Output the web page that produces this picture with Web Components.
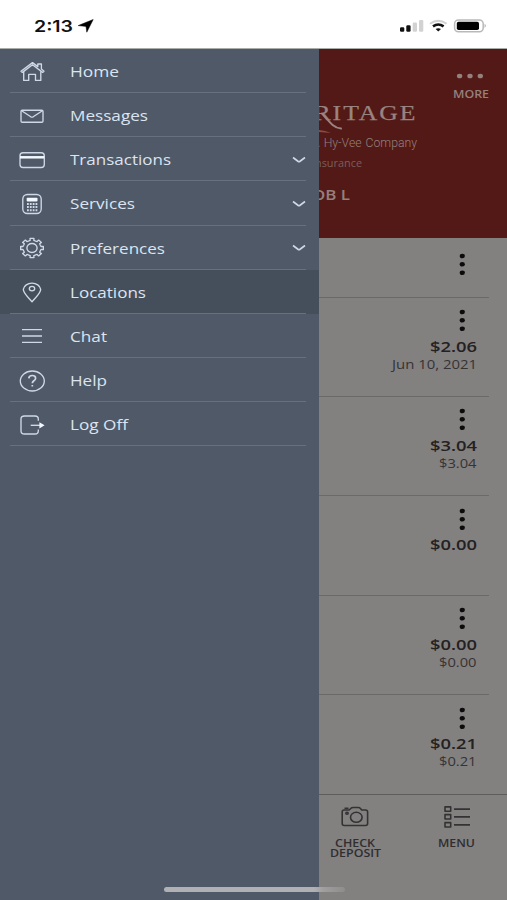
<!DOCTYPE html>
<html lang="en">
<head>
<meta charset="utf-8">
<title>Mobile banking menu</title>
<style>
html, body { margin: 0; height: 100%; background: #fff; }
body { font-family: "Open Sans", "Noto Sans", sans-serif; overflow: hidden; }
</style>
</head>
<body>
<bank-app></bank-app>
<script>
const define = (name, html, init) => {
  const t = document.createElement('template');
  t.innerHTML = html;
  customElements.define(name, class extends HTMLElement {
    connectedCallback() {
      if (this.shadowRoot) return;
      this.attachShadow({ mode: 'open' }).append(t.content.cloneNode(true));
      if (init) init(this, this.shadowRoot);
    }
  });
};

/* Text stretched horizontally to fill the width given by its attribute. */
define('wide-text', `
<style>
:host { display: block; flex: none; white-space: nowrap; }
span { display: inline-block; transform-origin: 0 50%; vertical-align: top; }
</style><span></span>`, (el, root) => {
  const s = root.querySelector('span');
  s.textContent = el.getAttribute('text');
  const w = +el.getAttribute('w');
  el.style.width = w + 'px';
  s.style.transform = 'scaleX(' + w / s.getBoundingClientRect().width + ')';
});

define('status-bar', `
<style>
:host { display: flex; box-sizing: border-box; height: 49px; padding: 0 19px 0 33.5px; align-items: center; background: #fff; border-bottom: 1px solid #a9aca9; color: #111; }
wide-text { font: 600 16px/20px Inter, sans-serif; margin-top: 4px; }
svg { display: block; margin-top: 3px; }
.arrow { margin-left: 5px; }
.right { margin-left: auto; }
</style>
<wide-text text="2:13" w="39"></wide-text>
<svg class="arrow" width="16" height="14" viewBox="0 0 16 14"><path d="M15.2.5 8.8 13.2 8 7.4.2 6.6Z" fill="#000" stroke="#000" stroke-width=".5" stroke-linejoin="round"/></svg>
<svg class="right" width="88" height="14" viewBox="0 0 88 14">
  <g fill="#111"><rect y="8.2" width="4.3" height="4.5" rx="1.2"/><rect x="6.3" y="6.2" width="4.3" height="6.5" rx="1.2"/></g>
  <g fill="#d2d2d2"><rect x="12.7" y="3.5" width="4.3" height="9.2" rx="1.2"/><rect x="19" y="1" width="4.3" height="11.7" rx="1.2"/></g>
  <g fill="none"><path d="M30 4.8Q38.3-1.3 46.6 4.8" stroke="#d2d2d2" stroke-width="2"/><path d="M33 7.4Q38.3 3.6 43.6 7.4" stroke="#111" stroke-width="2.6"/></g>
  <path d="M35.6 10Q38.3 8.3 41 10L38.3 12.6Z" fill="#111"/>
  <rect x="54.6" y="1" width="28.6" height="11.8" rx="3.8" fill="#fff" stroke="#b9b9b9" stroke-width="1.5"/>
  <rect x="56.8" y="2.7" width="22.2" height="8.4" rx="1.8" fill="#000"/>
  <path d="M84.6 4.8Q87 6.8 84.6 8.9Z" fill="#aaa"/>
</svg>`);

const icons = {
  home: '<path d="M-11 -.8.5-9.4 5.8-5.4V-8H9.4V-3L12-.8 10.6.4.5-7.2-9.6.4Z"/><path d="M-8.3-.5V8.4H-3.3V2.3H3.5V8.4H8.8V-.5"/>',
  mail: '<rect x="-11" y="-5.8" width="22" height="12" rx="1.2"/><path d="M-10.4-5.2-1.2.8Q0 1.5 1.2.8L10.4-5.2"/>',
  card: '<rect x="-12" y="-7.3" width="24.3" height="14.8" rx="3"/><path d="M-12-2.7H12.3" stroke="#f3f7ff" stroke-width="2.5"/>',
  calc: '<rect x="-9.2" y="-9.5" width="18.4" height="19" rx="4.5"/><rect x="-5.3" y="-6.3" width="10.8" height="3.8" rx=".8" fill="#f3f7ff" stroke="none"/><path d="M-5-0H5.4M-5 3.1H5.4M-5 6.2H5.4" stroke-width="2" stroke-dasharray="1.8 1.05"/>',
  gear: '',
  pin: '<path d="M0 9.8C-2.8 6-8.7 1.7-8.7-2.7A8.8 7.2 0 0 1 8.7-2.7C8.7 1.7 2.8 6 0 9.8Z"/><ellipse cx="0" cy="-3.4" rx="2.7" ry="2.3"/>',
  chat: '<path d="M-10-6.4H10M-10 0H10M-10 6.4H10"/>',
  help: '<ellipse cx=".3" cy="0" rx="12" ry="10"/><path d="M-3.2-2.6C-3-6.6 4-6.4 3.6-2.5 3.3-.1.3-.2.3 2.2M.3 3.9V5.5" stroke-width="1.7"/>',
  exit: '<path d="M6.3-4.2V-6Q6.3-9 3-9H-7.5Q-11-9-11-6V6Q-11 9 -7.5 9H3Q6.3 9 6.3 6V4.5"/><path d="M-1.3.3H8"/><path d="M7.4-2.8 12.6.3 7.4 3.4Z" fill="#f3f7ff" stroke="none"/>'
};
{
  /* Eight-toothed cog, wider than tall. */
  const p = [];
  for (let i = 0; i < 8; i++) {
    [[-.37, .78], [-.2, .8], [-.17, 1], [.17, 1], [.2, .8], [.37, .78]].forEach(([a, r]) => {
      const t = i * Math.PI / 4 + a;
      p.push((11.5 * r * Math.cos(t)).toFixed(2) + ' ' + (9.7 * r * Math.sin(t)).toFixed(2));
    });
  }
  icons.gear = '<path d="M' + p.join('L') + 'Z"/><ellipse rx="5.1" ry="4.5"/>';
}

define('menu-item', `
<style>
:host { display: flex; flex: none; box-sizing: border-box; height: 44.15px; align-items: center; position: relative; padding: 1px 13px 0 16px; color: #dce4f1; font-size: 14.2px; line-height: 20px; }
:host([active]) { background: #454f5c; }
:host::after { content: ""; position: absolute; left: 10px; right: 13px; bottom: 0; height: 1px; background: #67717e; }
svg { display: block; flex: none; fill: none; stroke: #cfd8e6; stroke-width: 1.35; stroke-linejoin: round; stroke-linecap: butt; }
wide-text { margin: 1px 0 0 22px; }
.chev { margin-left: auto; stroke-width: 1.6; display: none; }
:host([expandable]) .chev { display: block; }
</style>
<svg class="icon" width="32" height="30" viewBox="-16 -15 32 30"></svg>
<slot></slot>
<svg class="chev" width="14" height="8" viewBox="0 0 14 8"><path d="M1 1.5 6.3 5.5Q7 6 7.7 5.5L13 1.5"/></svg>`, (el, root) => {
  root.querySelector('.icon').innerHTML = icons[el.getAttribute('icon')];
  const t = document.createElement('wide-text');
  t.setAttribute('text', el.getAttribute('label'));
  t.setAttribute('w', el.getAttribute('w'));
  root.querySelector('slot').replaceWith(t);
});

define('side-drawer', `
<style>:host { display: flex; flex-direction: column; width: 318.5px; flex: none; background: #4f5967; }</style>
<menu-item icon="home" label="Home" w="49"></menu-item>
<menu-item icon="mail" label="Messages" w="78"></menu-item>
<menu-item icon="card" label="Transactions" w="101" expandable></menu-item>
<menu-item icon="calc" label="Services" w="65" expandable></menu-item>
<menu-item icon="gear" label="Preferences" w="95" expandable></menu-item>
<menu-item icon="pin" label="Locations" w="76" active></menu-item>
<menu-item icon="chat" label="Chat" w="37"></menu-item>
<menu-item icon="help" label="Help" w="37"></menu-item>
<menu-item icon="exit" label="Log Off" w="58"></menu-item>`);

define('brand-header', `
<style>
:host { display: flex; flex-direction: column; align-items: flex-end; flex: none; box-sizing: border-box; height: 188.5px; background: #521917; overflow: hidden; color: #95807d; }
.dots { display: block; margin: 23.5px 23px 0 0; }
.more { font-weight: 600; font-size: 11px; line-height: 14px; margin: 8.5px 18px 0 0; }
.logo { display: block; }
.sub { font-family: Roboto, sans-serif; font-weight: 300; font-size: 12px; line-height: 14px; margin: .5px 90.5px 0 0; word-spacing: 1px; }
.ins { font-size: 10px; line-height: 12px; margin: 7px 145px 0 0; color: #7d5d5a; }
.user { font-weight: 600; font-size: 14.2px; line-height: 20px; margin: 16px 157.5px 0 0; }
</style>
<svg class="dots" width="28" height="6" viewBox="0 0 28 6"><g fill="#95807d"><ellipse cx="3.6" cy="3" rx="2.7" ry="2.3"/><ellipse cx="14" cy="3" rx="2.7" ry="2.3"/><ellipse cx="24.3" cy="3" rx="2.7" ry="2.3"/></g></svg>
<wide-text class="more" text="MORE" w="36"></wide-text>
<svg class="logo" width="188" height="34" viewBox="0 0 188 34">
  <text x="-5.5" y="18.6" textLength="104" lengthAdjust="spacingAndGlyphs" letter-spacing="1.6" font-family="Liberation Serif, serif" font-size="20.5" fill="#998481" stroke="#998481" stroke-width=".25">RITAGE</text>
  <path d="M3 12.5C8 17 13 27 22 27.6" fill="none" stroke="#998481" stroke-width="2" stroke-linecap="round"/>
  <path d="M-3 29Q5 29 12 32Q5 31.5-3 30.6Z" fill="#8a4c43"/>
</svg>
<wide-text class="sub" text="A Hy-Vee Company" w="105"></wide-text>
<wide-text class="ins" text="nsurance" w="47"></wide-text>
<wide-text class="user" text="OB L" w="38"></wide-text>`);

define('account-row', `
<style>
:host { display: flex; flex-direction: column; align-items: flex-end; flex: none; box-sizing: border-box; height: 99.4px; margin-right: 18px; padding: 11.5px 12.5px 0 0; border-bottom: 1px solid #6c6969; color: #232122; }
:host([last]) { border-bottom: 0; }
:host([short]) { height: 60px; padding-top: 15.5px; }
svg { display: block; flex: none; margin-right: 11px; }
.amount { font-weight: 600; font-size: 14.4px; line-height: 20px; margin-top: 4.5px; }
.sub { font-size: 12px; line-height: 16px; margin-top: 0; color: #353334; }
</style>
<svg width="8" height="23" viewBox="0 0 8 23"><g fill="#0b0b0b"><ellipse cx="4.3" cy="3" rx="2.6" ry="2.3"/><ellipse cx="4.3" cy="11.3" rx="2.6" ry="2.3"/><ellipse cx="4.3" cy="19.7" rx="2.6" ry="2.3"/></g></svg>`, (el, root) => {
  for (const k of ['amount', 'sub']) {
    if (!el.hasAttribute(k)) continue;
    const t = document.createElement('wide-text');
    t.className = k;
    t.setAttribute('text', el.getAttribute(k));
    t.setAttribute('w', el.getAttribute(k + '-w') || (k === 'amount' ? 47 : 37.5));
    root.append(t);
  }
});

define('tab-bar', `
<style>
:host { display: grid; grid-template-columns: 73px 1fr; flex: 1; border-top: 1px solid #5e5c5c; color: #302e2f; font-weight: 600; font-size: 11px; line-height: 10px; }
div { display: flex; flex-direction: column; align-items: center; }
div:last-child { padding-left: 15px; }
svg { display: block; margin: 11px 0 9.5px; fill: none; stroke: #343233; stroke-width: 1.6; stroke-linejoin: round; }
</style>
<div>
  <svg width="28" height="22" viewBox="0 0 28 22"><path d="M3 4H8.2L10.3 2Q11 1.5 12 1.5H17.5Q18.5 1.5 19.2 2.2L20.7 4H24.5Q26.6 4 26.6 6V17.5Q26.6 19.5 24.5 19.5H3.2Q1.2 19.5 1.2 17.5V6Q1.2 4 3 4Z"/><path d="M3.5 2.3H7.5"/><ellipse cx="15.3" cy="11.3" rx="5.8" ry="5"/><ellipse cx="6" cy="7.3" rx="1.2" ry="1"/></svg>
  <wide-text text="CHECK" w="40"></wide-text>
  <wide-text text="DEPOSIT" w="51"></wide-text>
</div>
<div>
  <svg width="28" height="22" viewBox="0 0 28 22"><rect x="2" y=".9" width="5.7" height="4.4"/><rect x="2" y="8.6" width="5.7" height="4.4"/><rect x="2" y="16.6" width="5.7" height="4.4"/><path d="M11 3.1H27M11 10.9H27M11 18.9H27"/></svg>
  <wide-text text="MENU" w="37"></wide-text>
</div>`);

define('account-page', `
<style>:host { display: flex; flex-direction: column; flex: 1; min-width: 0; overflow: hidden; background: #838080; }</style>
<brand-header></brand-header>
<account-row short></account-row>
<account-row amount="$2.06" sub="Jun 10, 2021" sub-w="85"></account-row>
<account-row amount="$3.04" sub="$3.04"></account-row>
<account-row amount="$0.00"></account-row>
<account-row amount="$0.00" sub="$0.00"></account-row>
<account-row amount="$0.21" sub="$0.21" last></account-row>
<tab-bar></tab-bar>`);

define('bank-app', `
<style>
:host { display: flex; flex-direction: column; height: 900px; width: 507px; position: relative; overflow: hidden; }
main { display: flex; flex: 1; min-height: 0; }
.home { position: absolute; left: 164px; top: 887px; width: 181px; height: 5px; border-radius: 3px; background: linear-gradient(90deg, #b0b1b5 0 83%, #a09e9e 88%, #8f8c8c); }
</style>
<status-bar></status-bar>
<main><side-drawer></side-drawer><account-page></account-page></main>
<div class="home"></div>`);
</script>
</body>
</html>
